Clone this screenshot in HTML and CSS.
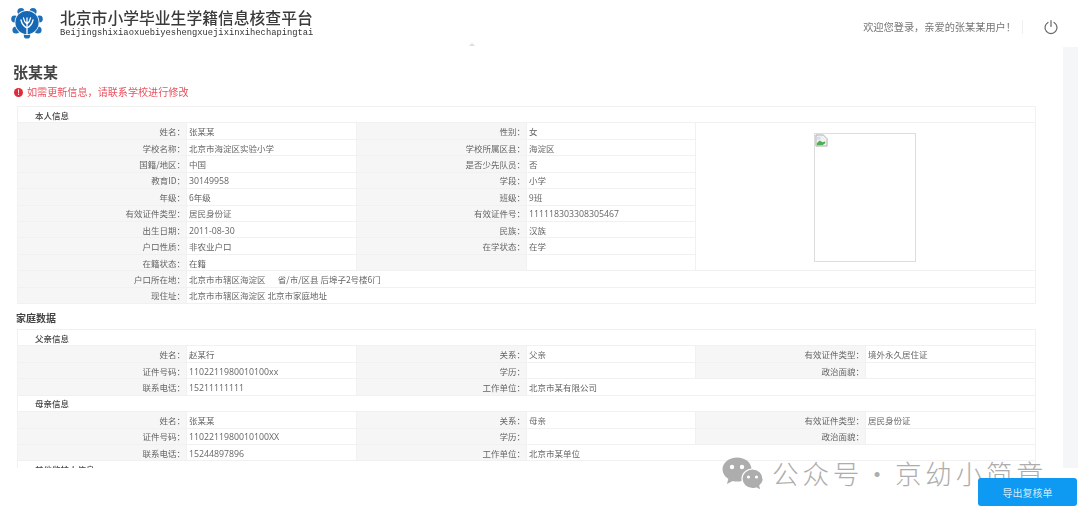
FILE: index.html
```html
<!DOCTYPE html>
<html lang="zh-CN">
<head>
<meta charset="utf-8">
<title>北京市小学毕业生学籍信息核查平台</title>
<link rel="stylesheet" href="styles.css">
</head>
<body>
<div class="page">
  <header class="topbar">
    <div class="brand">
      <svg class="logo" viewBox="0 0 32 32" width="32" height="32" aria-hidden="true">
        <g fill="#1f6fb8">
          <circle cx="10" cy="4.500" r="3.600"/><circle cx="22" cy="4.500" r="3.600"/><circle cx="28.400" cy="12" r="3.400"/><circle cx="27" cy="23" r="3.600"/>
          <circle cx="16" cy="28.400" r="3.200"/><circle cx="5" cy="23" r="3.600"/><circle cx="3.600" cy="12" r="3.400"/>
        </g>
        <circle cx="16" cy="15.500" r="12.400" fill="#fff"/>
        <circle cx="16" cy="15.500" r="11.600" fill="#1668b4"/>
        <path d="M16 26.500V11M16 21c-2-1-5-3-6-8M16 21c2-1 5-3 6-8M16 17c-1.500-1-3-3-3.500-6M16 17c1.500-1 3-3 3.500-6" fill="none" stroke="#fff" stroke-width="1.300" stroke-linecap="round"/>
      </svg>
      <div class="brand-text">
        <div class="brand-title">北京市小学毕业生学籍信息核查平台</div>
        <div class="brand-sub">Beijingshixiaoxuebiyeshengxuejixinxihechapingtai</div>
      </div>
    </div>
    <div class="user">
      <span class="welcome">欢迎您登录，亲爱的张某某用户！</span>
      <svg class="power" viewBox="0 0 16 16" width="16" height="16" aria-hidden="true">
        <path d="M5 3.400a6 6 0 1 0 6 0M8 1.500v6" fill="none" stroke="#666" stroke-width="1.200" stroke-linecap="round"/>
      </svg>
    </div>
  </header>
  <div class="caret"></div>
  <div class="shell">
    <main class="content">
      <h1 class="name">张某某</h1>
      <p class="notice"><span class="notice-icon">!</span>如需更新信息，请联系学校进行修改</p>
      <table class="info">
        <colgroup><col class="c1"><col class="c2"><col class="c3"><col class="c4"><col class="c5"></colgroup>
        <tr class="sect"><th colspan="5">本人信息</th></tr>
        <tr><td class="k">姓名：</td><td>张某某</td><td class="k">性别：</td><td>女</td>
          <td rowspan="9" class="photo-cell"><div class="photo"><svg viewBox="0 0 14 14" width="13" height="13" aria-hidden="true"><path d="M1 1h8l4 4v8H1z" fill="#f1f1f1" stroke="#aaa" stroke-width="1"/><path d="M2 10l3-3 3 2 3-1v2l-3 2H2z" fill="#4caf50"/><path d="M2 3h4v3H2z" fill="#cfe0f5"/></svg></div></td></tr>
        <tr><td class="k">学校名称：</td><td>北京市海淀区实验小学</td><td class="k">学校所属区县：</td><td>海淀区</td></tr>
        <tr><td class="k">国籍/地区：</td><td>中国</td><td class="k">是否少先队员：</td><td>否</td></tr>
        <tr><td class="k">教育ID：</td><td class="n">30149958</td><td class="k">学段：</td><td>小学</td></tr>
        <tr><td class="k">年级：</td><td>6年级</td><td class="k">班级：</td><td>9班</td></tr>
        <tr><td class="k">有效证件类型：</td><td>居民身份证</td><td class="k">有效证件号：</td><td class="n">111118303308305467</td></tr>
        <tr><td class="k">出生日期：</td><td class="n">2011-08-30</td><td class="k">民族：</td><td>汉族</td></tr>
        <tr><td class="k">户口性质：</td><td>非农业户口</td><td class="k">在学状态：</td><td>在学</td></tr>
        <tr><td class="k">在籍状态：</td><td>在籍</td><td class="k"></td><td></td></tr>
        <tr><td class="k">户口所在地：</td><td colspan="4">北京市市辖区海淀区　&nbsp;&nbsp;省/市/区县 后埠子2号楼6门</td></tr>
        <tr><td class="k">现住址：</td><td colspan="4">北京市市辖区海淀区 北京市家庭地址</td></tr>
      </table>
      <h2 class="section-title">家庭数据</h2>
      <table class="info family">
        <colgroup><col class="c1"><col class="c2"><col class="c3"><col class="c4"><col class="c6"><col class="c7"></colgroup>
        <tr class="sect"><th colspan="6">父亲信息</th></tr>
        <tr><td class="k">姓名：</td><td>赵某行</td><td class="k">关系：</td><td>父亲</td><td class="k">有效证件类型：</td><td>境外永久居住证</td></tr>
        <tr><td class="k">证件号码：</td><td class="n">1102211980010100xx</td><td class="k">学历：</td><td></td><td class="k">政治面貌：</td><td></td></tr>
        <tr><td class="k">联系电话：</td><td class="n">15211111111</td><td class="k">工作单位：</td><td colspan="3">北京市某有限公司</td></tr>
        <tr class="sect"><th colspan="6">母亲信息</th></tr>
        <tr><td class="k">姓名：</td><td>张某某</td><td class="k">关系：</td><td>母亲</td><td class="k">有效证件类型：</td><td>居民身份证</td></tr>
        <tr><td class="k">证件号码：</td><td class="n">1102211980010100XX</td><td class="k">学历：</td><td></td><td class="k">政治面貌：</td><td></td></tr>
        <tr><td class="k">联系电话：</td><td class="n">15244897896</td><td class="k">工作单位：</td><td colspan="3">北京市某单位</td></tr>
        <tr class="sect"><th colspan="6">其他监护人信息</th></tr>
      </table>
    </main>
    <div class="track"></div>
  </div>
</div>
<div class="watermark">
  <svg viewBox="0 0 42 33" width="42" height="33" aria-hidden="true">
    <path d="M15 0.500C7 0.500 0.500 5.800 0.500 12.300c0 3.900 2.300 7.300 5.800 9.500L5 27l5.800-3c1.300.4 2.800.6 4.200.6 8 0 14.500-5.300 14.500-12.200S23 0.500 15 0.500z" fill="#adadad"/>
    <path d="M41 21.800c0-5.400-4.600-9.800-10.500-9.800S20 16.400 20 21.800s4.600 9.800 10.500 9.800c1.200 0 2.400-.2 3.500-.6l5 2.400-1.200-4.800c2-1.800 3.700-4.100 3.700-6.800z" fill="#adadad" stroke="#fff" stroke-width="1.200"/>
    <circle cx="10" cy="10" r="2.200" fill="#fff"/><circle cx="20" cy="10" r="2.200" fill="#fff"/>
    <circle cx="26.500" cy="20" r="1.600" fill="#fff"/><circle cx="34.500" cy="20" r="1.600" fill="#fff"/>
  </svg>
  <span>公众号 · 京幼小简章</span>
</div>
<button class="export" type="button">导出复核单</button>
</body>
</html>
```
FILE: styles.css
```css
* { box-sizing: border-box; }
html, body { margin: 0; padding: 0; height: 100%; background: #fff; overflow: hidden; }
body { font-family: "Noto Sans CJK SC", "Liberation Sans", sans-serif; color: #666; position: relative; }
.page { filter: blur(0.4px); }
.topbar { height: 47px; display: flex; align-items: flex-start; justify-content: space-between; padding: 8px 21px 0 11px; }
.brand { display: flex; gap: 17px; }
.logo { display: block; margin-top: -1px; }
.brand-text { padding-top: 1px; }
.brand-title { font-size: 15.8px; line-height: 18px; color: #3a3a3a; white-space: nowrap; font-weight: 500; }
.brand-sub { font-family: "Liberation Mono", monospace; font-size: 8.8px; line-height: 11px; margin-top: 1px; color: #333; white-space: nowrap; }
.user { display: flex; align-items: center; padding-top: 11px; }
.welcome { font-size: 10.200px; line-height: 14px; color: #777; padding-right: 6px; margin-right: 20px; border-right: 1px solid #f0f0f0; }
.power { display: block; }
.caret { position: absolute; left: 469px; top: 43px; width: 0; height: 0; border: 3px solid transparent; border-bottom: 3px solid #ddd; border-top: 0; }
.shell { display: flex; height: 421px; overflow: hidden; padding-right: 2px; }
.content { width: 1063px; padding: 0 0 0 13px; overflow: hidden; }
.track { width: 15px; background: #f5f6f8; }
.name { margin: 15px 0 0; font-size: 15px; line-height: 20px; font-weight: 700; color: #444; }
.notice { margin: 3px 0 0; display: flex; align-items: center; font-size: 10.100px; line-height: 14px; color: #e8535f; padding-left: 1px; }
.notice-icon { width: 9px; height: 9px; border-radius: 50%; background: #e02b3c; color: #fff; font-size: 7px; line-height: 9px; text-align: center; font-weight: 700; margin-right: 4px; }
.info { table-layout: fixed; border-collapse: collapse; width: 1018px; margin: 7px 0 0 4px; font-size: 8.500px; background: #fff; }
.c1 { width: 169px; } .c2 { width: 170px; } .c3 { width: 170px; } .c4 { width: 169px; } .c5 { width: 340px; } .c6 { width: 170px; } .c7 { width: 170px; }
.info th, .info td { border: 1px solid #f1f1f1; height: 16.430px; padding: 0 2px; line-height: 12px; font-weight: 400; white-space: nowrap; overflow: hidden; text-align: left; color: #666; }
.info .sect th { padding-left: 17px; color: #444; font-weight: 500; }
.info .k { background: #f6f6f6; text-align: right; padding: 0 1px 0 0; }
.info .n { font-family: "Open Sans", "Noto Sans CJK SC", sans-serif; font-size: 8.750px; padding-top: 2px; }
.photo-cell { vertical-align: top; padding: 10px 0 0 !important; }
.photo { width: 102px; height: 129px; margin-left: 118px; border: 1px solid #ddd; }
.photo svg { display: block; }
.section-title { margin: 6px 0 0 3px; font-size: 10px; line-height: 15px; font-weight: 700; color: #444; }
.family { margin-top: 4px; }
.export { position: absolute; z-index: 2; left: 978px; top: 478px; width: 99px; height: 28px; border: 0; border-radius: 3px; background: #0e9af3; color: #cfeafc; font-family: inherit; font-size: 10px; padding: 0; }
.watermark { position: absolute; z-index: 1; left: 722px; top: 457px; display: flex; align-items: flex-start; gap: 8px; color: #adadad; font-size: 26.600px; line-height: 31px; letter-spacing: 3.800px; word-spacing: -9px; white-space: nowrap; font-weight: 300; }
.watermark svg { display: block; flex: none; }
```
